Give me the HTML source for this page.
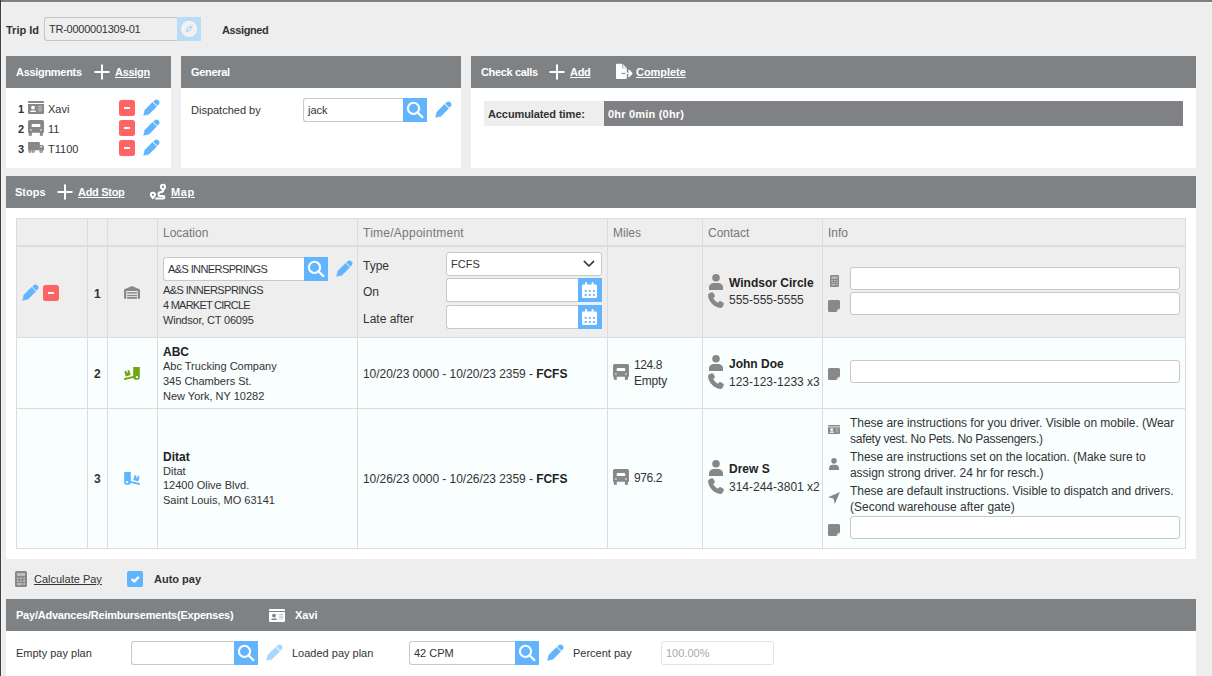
<!DOCTYPE html>
<html><head><meta charset="utf-8">
<style>
*{box-sizing:border-box;margin:0;padding:0}
html,body{width:1212px;height:676px;overflow:hidden}
body{position:relative;background:#eeeeee;font-family:"Liberation Sans",sans-serif;color:#333;font-size:11px}
.a{position:absolute}
.t{position:absolute;white-space:nowrap;line-height:1}
.b{font-weight:bold}
.hdr{position:absolute;background:#7e8285;height:32px}
.pnl{position:absolute;background:#fff}
.wt{color:#fff}
.u{text-decoration:underline}
.inp{position:absolute;background:#fff;border:1px solid #c8c8c8;border-radius:3px}
.btn{position:absolute;background:#62b4fe;width:24px;height:24px}
svg{position:absolute;overflow:visible}
.cell{position:absolute}
</style></head><body>
<svg width="0" height="0" style="position:absolute">
<defs>
<symbol id="pencil" viewBox="0 0 16 16" style="overflow:visible"><g transform="translate(0.5 15.5) rotate(-45)"><path d="M0.2 0 L4.8 -2.9 L15.7 -2.9 L15.7 2.9 L4.8 2.9 Z" fill="currentColor" stroke="currentColor" stroke-width="0.5" stroke-linejoin="round"/><path d="M16.7 -2.9 L18.4 -2.9 A2.9 2.9 0 0 1 18.4 2.9 L16.7 2.9 Z" fill="currentColor"/></g></symbol>
<symbol id="search" viewBox="0 0 24 24"><circle cx="10.5" cy="10.4" r="5.6" fill="none" stroke="#fff" stroke-width="2.1"/><path d="M14.6 14.5 L19.4 19.1" stroke="#fff" stroke-width="2.2" stroke-linecap="round"/></symbol>
<symbol id="minus" viewBox="0 0 16 16"><rect width="16" height="16" rx="2.5" fill="#ff6464"/><rect x="5" y="7" width="6" height="2" fill="#fff"/></symbol>
<symbol id="cal" viewBox="0 0 24 24"><g fill="#fff"><rect x="4" y="6.4" width="15" height="13.7" rx="1.4"/><rect x="7.1" y="4" width="1.9" height="4" rx="0.9"/><rect x="13.6" y="4" width="1.9" height="4" rx="0.9"/></g><g fill="#62b4fe"><rect x="6.7" y="11.9" width="1.9" height="1.9"/><rect x="10.8" y="11.9" width="1.9" height="1.9"/><rect x="14.9" y="11.9" width="1.9" height="1.9"/><rect x="6.7" y="16" width="1.9" height="1.9"/><rect x="10.8" y="16" width="1.9" height="1.9"/><rect x="14.9" y="16" width="1.9" height="1.9"/></g></symbol>
<symbol id="plus" viewBox="0 0 16 16"><path d="M8 0.5V15.5M0.5 8H15.5" stroke="#fff" stroke-width="2"/></symbol>
<symbol id="idcard" viewBox="0 0 16 13"><path d="M1.2 0H14.8A1.2 1.2 0 0 1 16 1.2V2.1H0V1.2A1.2 1.2 0 0 1 1.2 0z" fill="currentColor"/><path d="M0 3.1H16V11.8A1.2 1.2 0 0 1 14.8 13H1.2A1.2 1.2 0 0 1 0 11.8z" fill="currentColor"/><circle cx="5" cy="6.6" r="1.9" style="fill:var(--d,#fff)"/><rect x="2.2" y="9.4" width="5.8" height="1.7" rx="0.8" style="fill:var(--d,#fff)"/><g style="fill:var(--d,#fff)" opacity="0.45"><rect x="10.2" y="5" width="3.9" height="1"/><rect x="10.2" y="6.6" width="3.9" height="1"/><rect x="10.2" y="8.2" width="3.9" height="1"/><rect x="10.2" y="9.6" width="3.9" height="0.8"/></g></symbol>
<symbol id="truckfront" viewBox="0 0 16 16"><path d="M1.8 0h12.4A1.8 1.8 0 0 1 16 1.8V12.8H0V1.8A1.8 1.8 0 0 1 1.8 0z" fill="currentColor"/><rect x="0.8" y="12" width="3" height="3.8" fill="currentColor"/><rect x="11.9" y="12" width="3" height="3.8" fill="currentColor"/><path d="M4.6 4h6.8a0.8 0.8 0 0 1 0.8 0.8L12.3 7H3.6L3.8 4.8A0.8 0.8 0 0 1 4.6 4z" fill="#fff"/><rect x="1.8" y="9" width="2" height="2" fill="#fff" opacity="0.45"/><rect x="11.9" y="9" width="2" height="2" fill="#fff" opacity="0.45"/></symbol>
<symbol id="truck" viewBox="0 0 16 11"><g fill="currentColor"><rect x="0" y="0" width="11.9" height="8.2" rx="1"/><path d="M11.5 3H13.8A2.2 2.2 0 0 1 16 5.2V8.2H11.5Z"/><rect x="0.4" y="7.4" width="3" height="3.3" rx="1"/><rect x="3.8" y="7.4" width="3" height="3.3" rx="1"/><rect x="11.4" y="7.4" width="3.4" height="3.3" rx="1"/></g><rect x="12.2" y="4" width="1.6" height="1.5" fill="#fff" opacity="0.8"/><g fill="#fff" opacity="0.35"><rect x="1.2" y="8.3" width="1.4" height="1.6"/><rect x="4.6" y="8.3" width="1.4" height="1.6"/><rect x="12.4" y="8.3" width="1.4" height="1.6"/></g></symbol>
<symbol id="person" viewBox="0 0 14 16"><circle cx="7" cy="3.8" r="3.8" fill="currentColor"/><path d="M0 16v-2.5C0 10.5 2.5 9 5 9h4c2.5 0 5 1.5 5 4.5V16z" fill="currentColor"/></symbol>
<symbol id="phone" viewBox="0 0 16 16"><path d="M3.6 0.3 1.4 1.2C0.4 1.7 0 2.7 0.1 3.8 0.6 9.8 6.2 15.4 12.2 15.9 13.3 16 14.3 15.6 14.8 14.6L15.7 12.4C16 11.7 15.7 10.9 15 10.5L12.8 9.3C12.1 8.9 11.3 9.1 10.8 9.7L9.9 10.8C8 9.9 6.1 8 5.2 6.1L6.3 5.2C6.9 4.7 7.1 3.9 6.7 3.2L5.5 1C5.1 0.3 4.3 0 3.6 0.3z" fill="currentColor"/></symbol>
<symbol id="calc" viewBox="0 0 9 12"><rect width="9" height="12" rx="1.2" fill="currentColor"/><g fill="#fff" opacity="0.5"><rect x="1.5" y="1.6" width="6" height="2"/><rect x="1.5" y="4.9" width="1.3" height="1.2"/><rect x="3.85" y="4.9" width="1.3" height="1.2"/><rect x="6.2" y="4.9" width="1.3" height="1.2"/><rect x="1.5" y="7" width="1.3" height="1.2"/><rect x="3.85" y="7" width="1.3" height="1.2"/><rect x="6.2" y="7" width="1.3" height="1.2"/><rect x="1.5" y="9.1" width="3.6" height="1.3"/><rect x="6.2" y="9.1" width="1.3" height="1.3"/></g></symbol>
<symbol id="note" viewBox="0 0 12 12"><path d="M1.5 0h9A1.5 1.5 0 0 1 12 1.5V8.6L8.6 12H1.5A1.5 1.5 0 0 1 0 10.5V1.5A1.5 1.5 0 0 1 1.5 0z" fill="currentColor"/><path d="M12 8.6 8.6 12 C8.6 10 9.6 8.6 12 8.6z" fill="#d0d0d0"/></symbol>
<symbol id="arrow" viewBox="0 0 12 12"><path d="M12 0 0 5.2 5.4 6.6 6.8 12z" fill="currentColor"/></symbol>
<symbol id="warehouse" viewBox="0 0 16 14"><path d="M0 3.4 L8 0 L16 3.4 V12.8 H13.7 V5 H2.3 V12.8 H0 Z" fill="currentColor"/><rect x="3.2" y="6.1" width="9.7" height="1.5" fill="currentColor"/><rect x="3.2" y="8.9" width="9.7" height="1.3" fill="currentColor"/><rect x="3.2" y="11" width="9.7" height="1.8" fill="currentColor"/></symbol>
<symbol id="dolly" viewBox="0 0 16 15"><g fill="currentColor"><path d="M9.2 1 H15.8 V11.2 Q15.8 13.7 13.3 13.7 H11.7 Q9.2 13.7 9.2 11.2 Z"/><path d="M0.8 13 L9.6 10.9" stroke="currentColor" stroke-width="1.9" stroke-linecap="round"/><path transform="rotate(-15 3.6 7.3)" d="M1 4.6 H2.9 V6.5 H4.2 V4.6 H6.1 V9.8 H1 Z"/></g><circle cx="12.9" cy="11.1" r="1.15" fill="#f9fefe"/></symbol>
<symbol id="chev" viewBox="0 0 12 7"><path d="M0.6 0.6 6 6 11.4 0.6" fill="none" stroke="#333" stroke-width="1.4"/></symbol>
</defs></svg>

<!-- frame borders -->
<div class="a" style="left:1px;top:2px;width:1211px;height:1px;background:#f5f5f5"></div>
<div class="a" style="left:1px;top:2px;width:1px;height:674px;background:#f6f6f6"></div>
<div class="a" style="left:0;top:0;width:1212px;height:2px;background:#7d8184"></div>
<div class="a" style="left:0;top:0;width:1px;height:676px;background:#3d3d3d"></div>

<!-- Trip id row -->
<div class="t b" style="left:6px;top:25px;font-size:11px">Trip Id</div>
<div class="a" style="left:44px;top:17px;width:134px;height:24px;border:1px solid #c6c6c6;border-right:none;border-radius:3px 0 0 3px;background:#eeeeee"></div>
<div class="t" style="left:49px;top:24px;font-size:11px;color:#333;letter-spacing:-0.25px">TR-0000001309-01</div>
<div class="a" style="left:177px;top:17px;width:24px;height:24px;background:#bbdcf5"></div>
<svg style="left:177px;top:17px" width="24" height="24" viewBox="0 0 24 24"><circle cx="12.1" cy="11.9" r="8.1" fill="#f2f2f2"/><path d="M16.1 8.1 L13.9 13.7 L8.1 15.6 L10.3 10.0 Z" fill="#b9daf4"/><circle cx="12.1" cy="11.9" r="1.1" fill="#f2f2f2"/></svg>
<div class="t b" style="left:222px;top:25px;font-size:11px;letter-spacing:-0.4px">Assigned</div>

<!-- Assignments panel -->
<div class="pnl" style="left:6px;top:56px;width:165px;height:112px"></div>
<div class="hdr" style="left:6px;top:56px;width:165px"></div>
<div class="t b wt" style="left:16px;top:67px;font-size:11px;letter-spacing:-0.3px">Assignments</div>
<svg style="left:94px;top:64px" width="16" height="16"><use href="#plus"/></svg>
<div class="t b wt u" style="left:115px;top:67px;font-size:11px;letter-spacing:-0.3px">Assign</div>

<div class="t b" style="left:18px;top:104px;font-size:11px">1</div>
<svg style="left:28px;top:101px;color:#888" width="16" height="13"><use href="#idcard"/></svg>
<div class="t" style="left:48px;top:104px;font-size:11px">Xavi</div>
<svg style="left:119px;top:100px" width="16" height="16"><use href="#minus"/></svg>
<svg style="left:143px;top:100px;color:#62b4fe" width="16" height="16"><use href="#pencil"/></svg>

<div class="t b" style="left:18px;top:124px;font-size:11px">2</div>
<svg style="left:28px;top:120px;color:#888" width="16" height="16"><use href="#truckfront"/></svg>
<div class="t" style="left:48px;top:124px;font-size:11px">11</div>
<svg style="left:119px;top:120px" width="16" height="16"><use href="#minus"/></svg>
<svg style="left:143px;top:120px;color:#62b4fe" width="16" height="16"><use href="#pencil"/></svg>

<div class="t b" style="left:18px;top:144px;font-size:11px">3</div>
<svg style="left:28px;top:142px;color:#888" width="16" height="11"><use href="#truck"/></svg>
<div class="t" style="left:48px;top:144px;font-size:11px">T1100</div>
<svg style="left:119px;top:140px" width="16" height="16"><use href="#minus"/></svg>
<svg style="left:143px;top:140px;color:#62b4fe" width="16" height="16"><use href="#pencil"/></svg>

<!-- General panel -->
<div class="pnl" style="left:181px;top:56px;width:280px;height:112px"></div>
<div class="hdr" style="left:181px;top:56px;width:280px"></div>
<div class="t b wt" style="left:191px;top:67px;font-size:11px;letter-spacing:-0.3px">General</div>
<div class="t" style="left:191px;top:105px;font-size:11px">Dispatched by</div>
<div class="inp" style="left:303px;top:98px;width:101px;height:24px;border-right:none;border-radius:3px 0 0 3px"></div>
<div class="t" style="left:308px;top:105px;font-size:11px">jack</div>
<svg style="left:403px;top:98px;background:#62b4fe" width="24" height="24"><use href="#search"/></svg>
<svg style="left:435px;top:102px;color:#62b4fe" width="16" height="16"><use href="#pencil"/></svg>

<!-- Check calls panel -->
<div class="pnl" style="left:471px;top:56px;width:725px;height:112px"></div>
<div class="hdr" style="left:471px;top:56px;width:725px"></div>
<div class="t b wt" style="left:481px;top:67px;font-size:11px;letter-spacing:-0.35px">Check calls</div>
<svg style="left:549px;top:64px" width="16" height="16"><use href="#plus"/></svg>
<div class="t b wt u" style="left:570px;top:67px;font-size:11px;letter-spacing:-0.3px">Add</div>
<svg style="left:615px;top:64px" width="18" height="16" viewBox="0 0 18 16"><path d="M1.8 0.8H7.2V5.3H11.8V15A1 1 0 0 1 10.8 16H1.8A0.8 0.8 0 0 1 1 15.2V1.6A0.8 0.8 0 0 1 1.8 0.8z" fill="#fff" transform="translate(0 -1)"/><path d="M7.6 0.8 L11.8 5 H7.6z" fill="#e6e6e6" transform="translate(0 -1)"/><path d="M6.5 9.4H11.2" stroke="#7e8285" stroke-width="1"/><path d="M11.2 9.4H16.2M14 6.6 16.6 9.4 14 12.2" stroke="#fff" stroke-width="1.9" fill="none" stroke-linejoin="round" stroke-linecap="round"/></svg>
<div class="t b wt u" style="left:636px;top:67px;font-size:11px;letter-spacing:-0.05px">Complete</div>
<div class="a" style="left:484px;top:101px;width:120px;height:25px;background:#eeeeee"></div>
<div class="a" style="left:604px;top:101px;width:579px;height:25px;background:#808184"></div>
<div class="t b" style="left:488px;top:109px;font-size:11px;letter-spacing:-0.1px">Accumulated time:</div>
<div class="t b wt" style="left:608px;top:109px;font-size:11px;letter-spacing:0.2px">0hr 0min (0hr)</div>

<!-- Stops panel -->
<div class="pnl" style="left:6px;top:176px;width:1190px;height:383px"></div>
<div class="hdr" style="left:6px;top:176px;width:1190px"></div>
<div class="t b wt" style="left:15px;top:187px;font-size:11px;letter-spacing:0px">Stops</div>
<svg style="left:57px;top:184px" width="16" height="16"><use href="#plus"/></svg>
<div class="t b wt u" style="left:78px;top:187px;font-size:11px;letter-spacing:-0.3px">Add Stop</div>
<svg style="left:149px;top:183px" width="17" height="17" viewBox="0 0 17 17"><path d="M14 7.6 C14 8.9 13 9.3 11.4 9.3 A1.9 1.9 0 0 0 11.4 13.1 H14.1 A1.25 1.25 0 0 1 14.1 15.6 H6.3" fill="none" stroke="#fff" stroke-width="2"/><path d="M3.9 16.5 C3.9 16.5 0.8 13.6 0.8 11.8 A3.1 3.1 0 0 1 7 11.8 C7 13.6 3.9 16.5 3.9 16.5 Z" fill="#fff"/><circle cx="3.9" cy="11.8" r="1.1" fill="#7e8285"/><path d="M14 8.6 C14 8.6 10.9 5.7 10.9 3.9 A3.1 3.1 0 0 1 17.1 3.9 C17.1 5.7 14 8.6 14 8.6 Z" fill="#fff"/><circle cx="14" cy="3.9" r="1.1" fill="#7e8285"/></svg>
<div class="t b wt u" style="left:171px;top:187px;font-size:11px;letter-spacing:0.6px">Map</div>

<!-- table -->
<div class="a" style="left:16px;top:218px;width:1170px;height:28px;background:#eeeeee"></div>
<div class="a" style="left:16px;top:247px;width:1170px;height:90px;background:#eeeeee"></div>
<div class="a" style="left:16px;top:338px;width:1170px;height:210px;background:#f9fefe"></div>
<div class="a" style="left:16px;top:218px;width:1170px;height:1px;background:#dcdcdc"></div>
<div class="a" style="left:16px;top:245px;width:1170px;height:2px;background:#dcdcdc"></div>
<div class="a" style="left:16px;top:337px;width:1170px;height:1px;background:#dcdcdc"></div>
<div class="a" style="left:16px;top:408px;width:1170px;height:1px;background:#dcdcdc"></div>
<div class="a" style="left:16px;top:548px;width:1170px;height:1px;background:#dcdcdc"></div>
<div class="a" style="left:16px;top:218px;width:1px;height:331px;background:#dcdcdc"></div>
<div class="a" style="left:87px;top:218px;width:1px;height:331px;background:#dcdcdc"></div>
<div class="a" style="left:107px;top:218px;width:1px;height:331px;background:#dcdcdc"></div>
<div class="a" style="left:157px;top:218px;width:1px;height:331px;background:#dcdcdc"></div>
<div class="a" style="left:357px;top:218px;width:1px;height:331px;background:#dcdcdc"></div>
<div class="a" style="left:607px;top:218px;width:1px;height:331px;background:#dcdcdc"></div>
<div class="a" style="left:702px;top:218px;width:1px;height:331px;background:#dcdcdc"></div>
<div class="a" style="left:822px;top:218px;width:1px;height:331px;background:#dcdcdc"></div>
<div class="a" style="left:1185px;top:218px;width:1px;height:331px;background:#dcdcdc"></div>

<div class="t" style="left:163px;top:227px;font-size:12px;color:#777">Location</div>
<div class="t" style="left:363px;top:227px;font-size:12px;color:#777;letter-spacing:0.25px">Time/Appointment</div>
<div class="t" style="left:613px;top:227px;font-size:12px;color:#777">Miles</div>
<div class="t" style="left:708px;top:227px;font-size:12px;color:#777">Contact</div>
<div class="t" style="left:828px;top:227px;font-size:12px;color:#777">Info</div>

<!-- row 1 -->
<svg style="left:22px;top:285px;color:#62b4fe" width="16" height="16"><use href="#pencil"/></svg>
<svg style="left:43px;top:285px" width="16" height="16"><use href="#minus"/></svg>
<div class="t b" style="left:94px;top:288px;font-size:12px">1</div>
<svg style="left:124px;top:286px;color:#888" width="16" height="14"><use href="#warehouse"/></svg>
<div class="inp" style="left:163px;top:257px;width:141px;height:24px;border-right:none;border-radius:3px 0 0 3px"></div>
<div class="t" style="left:168px;top:264px;font-size:11px;letter-spacing:-0.6px">A&amp;S INNERSPRINGS</div>
<svg style="left:304px;top:257px;background:#62b4fe" width="24" height="24"><use href="#search"/></svg>
<svg style="left:336px;top:261px;color:#62b4fe" width="16" height="16"><use href="#pencil"/></svg>
<div class="t" style="left:163px;top:285px;font-size:11px;letter-spacing:-0.55px">A&amp;S INNERSPRINGS</div>
<div class="t" style="left:163px;top:300px;font-size:11px;letter-spacing:-0.75px">4 MARKET CIRCLE</div>
<div class="t" style="left:163px;top:315px;font-size:11px;letter-spacing:-0.2px">Windsor, CT 06095</div>

<div class="t" style="left:363px;top:260px;font-size:12px">Type</div>
<div class="inp" style="left:446px;top:252px;width:156px;height:24px"></div>
<div class="t" style="left:451px;top:259px;font-size:11px">FCFS</div>
<svg style="left:583px;top:260px" width="12" height="8"><path d="M1.3 1.4 L6 6 L10.6 1.4" fill="none" stroke="#333" stroke-width="1.6" stroke-linecap="round" stroke-linejoin="round"/></svg>
<div class="t" style="left:363px;top:286px;font-size:12px">On</div>
<div class="inp" style="left:446px;top:278px;width:133px;height:24px;border-right:none;border-radius:3px 0 0 3px"></div>
<svg style="left:578px;top:278px;background:#62b4fe" width="24" height="24"><use href="#cal"/></svg>
<div class="t" style="left:363px;top:313px;font-size:12px">Late after</div>
<div class="inp" style="left:446px;top:305px;width:133px;height:24px;border-right:none;border-radius:3px 0 0 3px"></div>
<svg style="left:578px;top:305px;background:#62b4fe" width="24" height="24"><use href="#cal"/></svg>

<svg style="left:709px;top:274px;color:#888" width="14" height="16"><use href="#person"/></svg>
<svg style="left:708px;top:292px;color:#888" width="16" height="16"><use href="#phone"/></svg>
<div class="t b" style="left:729px;top:277px;font-size:12px;color:#222">Windsor Circle</div>
<div class="t" style="left:729px;top:294px;font-size:12px">555-555-5555</div>
<svg style="left:830px;top:275px;color:#888" width="9" height="12"><use href="#calc"/></svg>
<div class="inp" style="left:850px;top:267px;width:330px;height:23px"></div>
<svg style="left:828px;top:300px;color:#888" width="12" height="12"><use href="#note"/></svg>
<div class="inp" style="left:850px;top:292px;width:330px;height:23px"></div>

<!-- row 2 -->
<div class="t b" style="left:94px;top:368px;font-size:12px">2</div>
<svg style="left:124px;top:366px;color:#72a415" width="16" height="15"><use href="#dolly"/></svg>
<div class="t b" style="left:163px;top:346px;font-size:12px;color:#222">ABC</div>
<div class="t" style="left:163px;top:361px;font-size:11px">Abc Trucking Company</div>
<div class="t" style="left:163px;top:376px;font-size:11px">345 Chambers St.</div>
<div class="t" style="left:163px;top:391px;font-size:11px">New York, NY 10282</div>
<div class="t" style="left:363px;top:368px;font-size:12px;letter-spacing:-0.05px">10/20/23 0000 - 10/20/23 2359 - <b style="color:#222">FCFS</b></div>
<svg style="left:613px;top:364px;color:#888" width="16" height="16"><use href="#truckfront"/></svg>
<div class="t" style="left:634px;top:359px;font-size:12px;letter-spacing:-0.4px">124.8</div>
<div class="t" style="left:634px;top:375px;font-size:12px;letter-spacing:-0.2px">Empty</div>
<svg style="left:709px;top:355px;color:#888" width="14" height="16"><use href="#person"/></svg>
<svg style="left:708px;top:373px;color:#888" width="16" height="16"><use href="#phone"/></svg>
<div class="t b" style="left:729px;top:358px;font-size:12px;color:#222">John Doe</div>
<div class="t" style="left:729px;top:376px;font-size:12px">123-123-1233 x3</div>
<svg style="left:828px;top:368px;color:#888" width="12" height="12"><use href="#note"/></svg>
<div class="inp" style="left:850px;top:360px;width:330px;height:23px"></div>

<!-- row 3 -->
<div class="t b" style="left:94px;top:473px;font-size:12px">3</div>
<svg style="left:124px;top:471px;color:#62b4fe;transform:scaleX(-1)" width="16" height="15"><use href="#dolly"/></svg>
<div class="t b" style="left:163px;top:451px;font-size:12px;color:#222">Ditat</div>
<div class="t" style="left:163px;top:466px;font-size:11px">Ditat</div>
<div class="t" style="left:163px;top:480px;font-size:11px">12400 Olive Blvd.</div>
<div class="t" style="left:163px;top:495px;font-size:11px">Saint Louis, MO 63141</div>
<div class="t" style="left:363px;top:473px;font-size:12px;letter-spacing:-0.05px">10/26/23 0000 - 10/26/23 2359 - <b style="color:#222">FCFS</b></div>
<svg style="left:613px;top:469px;color:#888" width="16" height="16"><use href="#truckfront"/></svg>
<div class="t" style="left:634px;top:472px;font-size:12px;letter-spacing:-0.4px">976.2</div>
<svg style="left:709px;top:460px;color:#888" width="14" height="16"><use href="#person"/></svg>
<svg style="left:708px;top:478px;color:#888" width="16" height="16"><use href="#phone"/></svg>
<div class="t b" style="left:729px;top:463px;font-size:12px;color:#222">Drew S</div>
<div class="t" style="left:729px;top:481px;font-size:12px">314-244-3801 x2</div>

<svg style="left:828px;top:425px;color:#888" width="12" height="9" viewBox="0 0 16 13" preserveAspectRatio="none"><use href="#idcard"/></svg>
<div class="t" style="left:850px;top:417px;font-size:12px;letter-spacing:-0.045px">These are instructions for you driver. Visible on mobile. (Wear</div>
<div class="t" style="left:850px;top:433px;font-size:12px;letter-spacing:-0.27px">safety vest. No Pets. No Passengers.)</div>
<svg style="left:829px;top:458px;color:#888" width="10" height="12" viewBox="0 0 14 16" preserveAspectRatio="none"><use href="#person"/></svg>
<div class="t" style="left:850px;top:451px;font-size:12px;letter-spacing:-0.055px">These are instructions set on the location. (Make sure to</div>
<div class="t" style="left:850px;top:467px;font-size:12px;letter-spacing:-0.05px">assign strong driver. 24 hr for resch.)</div>
<svg style="left:828px;top:492px;color:#888" width="12" height="12"><use href="#arrow"/></svg>
<div class="t" style="left:850px;top:485px;font-size:12px;letter-spacing:-0.05px">These are default instructions. Visible to dispatch and drivers.</div>
<div class="t" style="left:850px;top:501px;font-size:12px;letter-spacing:0px">(Second warehouse after gate)</div>
<svg style="left:828px;top:524px;color:#888" width="12" height="12"><use href="#note"/></svg>
<div class="inp" style="left:850px;top:516px;width:330px;height:23px"></div>


<!-- calc row -->
<svg style="left:15px;top:571px;color:#888" width="12" height="16"><use href="#calc"/></svg>
<div class="t u" style="left:34px;top:574px;font-size:11px">Calculate Pay</div>
<div class="a" style="left:127px;top:571px;width:16px;height:16px;background:#62b4fe;border-radius:2px"></div>
<svg style="left:127px;top:571px" width="16" height="16"><path d="M4.6 8.1 7.3 10.4 11.8 5.9" fill="none" stroke="#fff" stroke-width="2.3"/></svg>
<div class="t b" style="left:154px;top:574px;font-size:11px">Auto pay</div>

<!-- Pay panel -->
<div class="pnl" style="left:6px;top:599px;width:1190px;height:100px"></div>
<div class="hdr" style="left:6px;top:599px;width:1190px"></div>
<div class="t b wt" style="left:16px;top:610px;font-size:11px;letter-spacing:-0.22px">Pay/Advances/Reimbursements(Expenses)</div>
<svg style="left:269px;top:609px;color:#fff;--d:#7e8285" width="16" height="13"><use href="#idcard"/></svg>
<div class="t b wt" style="left:295px;top:610px;font-size:11px">Xavi</div>
<div class="t" style="left:16px;top:648px;font-size:11px">Empty pay plan</div>
<div class="inp" style="left:131px;top:641px;width:104px;height:24px;border-right:none;border-radius:3px 0 0 3px"></div>
<svg style="left:234px;top:641px;background:#62b4fe" width="24" height="24"><use href="#search"/></svg>
<svg style="left:266px;top:645px;color:#aad6fb" width="16" height="16"><use href="#pencil"/></svg>
<div class="t" style="left:292px;top:648px;font-size:11px">Loaded pay plan</div>
<div class="inp" style="left:409px;top:641px;width:107px;height:24px;border-right:none;border-radius:3px 0 0 3px"></div>
<div class="t" style="left:414px;top:648px;font-size:11px">42 CPM</div>
<svg style="left:515px;top:641px;background:#62b4fe" width="24" height="24"><use href="#search"/></svg>
<svg style="left:547px;top:645px;color:#62b4fe" width="16" height="16"><use href="#pencil"/></svg>
<div class="t" style="left:573px;top:648px;font-size:11px">Percent pay</div>
<div class="inp" style="left:661px;top:641px;width:113px;height:24px;border-color:#e2e2e2;background:#fff"></div>
<div class="t" style="left:666px;top:648px;font-size:11px;color:#aaa">100.00%</div>

</body></html>
